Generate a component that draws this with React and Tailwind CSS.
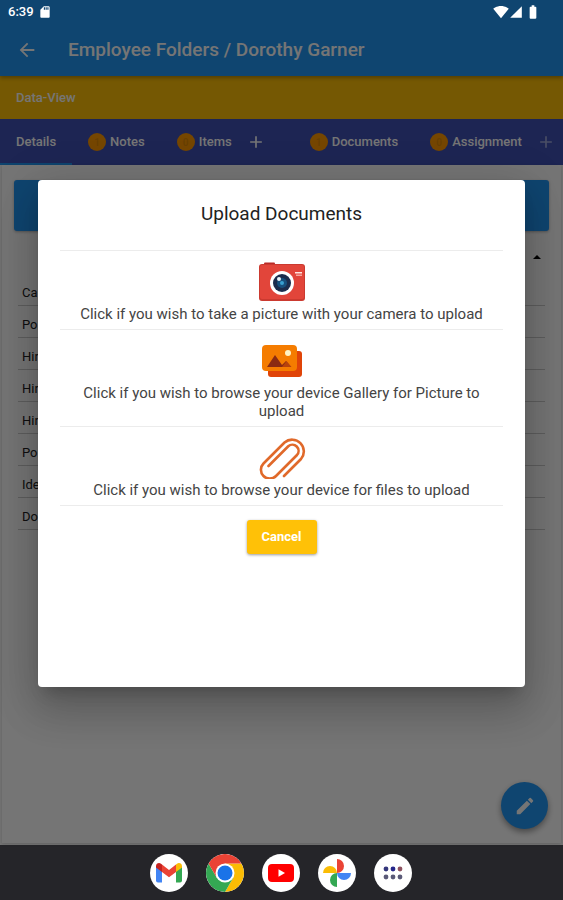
import React from 'react';
import { MdArrowBack, MdAdd, MdEdit, MdSdCard, MdSignalWifi4Bar, MdBatteryFull, MdSignalCellular4Bar } from 'react-icons/md';

const tabs = [
  { label: 'Details', active: true },
  { label: 'Notes', count: 1 },
  { label: 'Items', count: 0, canAdd: true },
  { label: 'Documents', count: 1 },
  { label: 'Assignment', count: 0, canAdd: true, faded: true },
];

const fields = ['Ca', 'Po', 'Hir', 'Hir', 'Hir', 'Po', 'Ide', 'Do'];

const CameraIcon = () => (
  <svg viewBox="0 0 48 40" className="h-10 w-12" aria-hidden="true">
    <path d="M6 3V1.500Q6 .5 7 .5h9q1 0 1 1V3z" fill="#b92b27" />
    <rect x="1" y="2" width="46" height="37" rx="3" fill="#cb3a30" />
    <rect x="2" y="3" width="44" height="34" rx="2" fill="#e2453a" />
    <rect x="37" y="10" width="7" height="1.500" fill="#ffe6e0" />
    <rect x="38" y="12.500" width="6" height="1.500" fill="#f3a59c" />
    <circle cx="24" cy="21" r="12" fill="#fff" />
    <circle cx="24" cy="21" r="9" fill="#1c2c4c" />
    <circle cx="24" cy="21" r="5" fill="#174f7c" />
    <circle cx="24" cy="21" r="2" fill="#39a0d0" />
    <circle cx="21" cy="17" r="2" fill="#e9f4fa" />
  </svg>
);

const GalleryIcon = () => (
  <svg viewBox="0 0 42 34" className="h-[34px] w-[42px]" aria-hidden="true">
    <rect x="7" y="7" width="34" height="26" rx="3" fill="#e04408" />
    <rect x="1" y="1" width="35" height="26" rx="4" fill="#f57c00" />
    <path d="M6 23 14 11l7 10 4-4 5 6z" fill="#8b2b12" />
    <path d="m21 23 4.500-6 5 6z" fill="#b8420c" />
    <circle cx="27" cy="9" r="3" fill="#fff3c4" />
  </svg>
);

const PaperclipIcon = () => (
  <svg viewBox="0 0 48 42" className="h-[42px] w-12" fill="none" stroke="#e0692a" strokeWidth="2.600" strokeLinecap="round" aria-hidden="true">
    <path d="M26 39 43 22A11.700 11.700 0 0 0 26.500 5.500L5.500 26.500A8.800 8.800 0 0 0 18 39L39 18A6.200 6.200 0 0 0 30.250 9.250L10.500 29" />
  </svg>
);

const GmailLogo = () => (
  <svg viewBox="0 0 26 20" className="h-5 w-[26px]" aria-hidden="true">
    <path d="M0 3v14.500Q0 19.500 2 19.500h4V8z" fill="#4285f4" />
    <path d="M26 3v14.500q0 2-2 2h-4V8z" fill="#34a853" />
    <path d="M20 1.500V9l6-4.500V3.200C26 .5 23-.8 21 .8z" fill="#fbbc04" />
    <path d="M6 9V1.600l7 5.300 7-5.300V9l-7 5.300z" fill="#ea4335" />
    <path d="M0 3.200V4.500L6 9V1.600L5 .8C3-.8 0 .5 0 3.200z" fill="#c5221f" />
  </svg>
);

const ChromeLogo = () => (
  <svg viewBox="0 0 48 48" className="h-[38px] w-[38px]" aria-hidden="true">
    <path d="M24 12h20.800A24 24 0 0 1 24 48l10.400-18z" fill="#fbbc04" />
    <path d="M13.600 30 3.200 12A24 24 0 0 0 24 48l10.400-18z" fill="#34a853" />
    <path d="M24 12h20.800A24 24 0 0 0 3.200 12l10.400 18z" fill="#ea4335" />
    <circle cx="24" cy="24" r="12" fill="#fff" />
    <circle cx="24" cy="24" r="9.500" fill="#1a73e8" />
  </svg>
);

const YoutubeLogo = () => (
  <svg viewBox="0 0 26 18" className="h-[18px] w-[26px]" aria-hidden="true">
    <rect width="26" height="18" rx="4" fill="#f00" />
    <path d="M10.500 5.200v7.600L17 9z" fill="#fff" />
  </svg>
);

const PhotosLogo = () => (
  <svg viewBox="0 0 28 28" className="h-7 w-7" aria-hidden="true">
    <path d="M14 0a7 7 0 0 1 0 14z" fill="#ea4335" />
    <path d="M28 14a7 7 0 0 1-14 0z" fill="#4285f4" />
    <path d="M14 28a7 7 0 0 1 0-14z" fill="#34a853" />
    <path d="M0 14a7 7 0 0 1 14 0z" fill="#fbbc04" />
  </svg>
);

const AppsIcon = () => (
  <svg viewBox="0 0 20 14" className="h-3.5 w-5" aria-hidden="true">
    <circle cx="3" cy="3" r="2.400" fill="#34377c" />
    <circle cx="10" cy="3" r="2.400" fill="#25278a" />
    <circle cx="17" cy="3" r="2.400" fill="#8e5260" />
    <circle cx="3" cy="11" r="2.400" fill="#5a5a78" />
    <circle cx="10" cy="11" r="2.400" fill="#5a5a78" />
    <circle cx="17" cy="11" r="2.400" fill="#5a5a78" />
  </svg>
);

const options = [
  { text: 'Click if you wish to take a picture with your camera to upload', icon: CameraIcon },
  { text: 'Click if you wish to browse your device Gallery for Picture to upload', icon: GalleryIcon },
  { text: 'Click if you wish to browse your device for files to upload', icon: PaperclipIcon },
];

const dock = [
  { name: 'Gmail', logo: GmailLogo },
  { name: 'Chrome', logo: ChromeLogo },
  { name: 'YouTube', logo: YoutubeLogo },
  { name: 'Photos', logo: PhotosLogo },
  { name: 'All apps', logo: AppsIcon },
];

const StatusBar = () => (
  <div className="absolute inset-x-0 top-0 z-20 flex h-6 items-center px-2 text-white">
    <span className="text-[13px] font-medium">6:39</span>
    <MdSdCard className="ml-1 h-3.5 w-3.5" />
    <div className="ml-auto flex items-center pr-3.5">
      <MdSignalWifi4Bar className="h-4 w-4" />
      <MdSignalCellular4Bar className="h-3.5 w-3.5" />
      <MdBatteryFull className="ml-0.5 h-4 w-4" />
    </div>
  </div>
);

const UploadDialog = () => (
  <div className="absolute inset-0 z-10 flex items-center justify-center bg-black/54 px-[38px] pt-[22px]">
    <div
      role="dialog"
      aria-labelledby="upload-title"
      className="flex h-[507px] w-full flex-col items-center rounded bg-white px-[22px] pt-[22px] shadow-[0_11px_15px_-7px_rgba(0,0,0,0.2),0_24px_38px_3px_rgba(0,0,0,0.14),0_9px_46px_8px_rgba(0,0,0,0.12)]"
    >
      <h2 id="upload-title" className="text-[19px] leading-6 text-[#222]">Upload Documents</h2>
      <div className="mt-6 w-full border-t border-[#ececec]">
        {options.map(({ text, icon: Icon }) => (
          <button key={text} className="flex w-full flex-col items-center border-b border-[#ececec] px-4 pt-2 pb-1.5">
            <span className="flex h-[46px] items-center"><Icon /></span>
            <span className="text-center text-[15px] leading-[18px] text-[#444]">{text}</span>
          </button>
        ))}
      </div>
      <button className="mt-3.5 h-[34px] w-[70px] rounded-[3px] bg-[#ffc107] text-[13px] font-bold text-white shadow-[0_1px_3px_rgba(0,0,0,0.4)]">
        Cancel
      </button>
    </div>
  </div>
);

const App = () => {
  return (
    <div className="flex min-h-screen flex-col font-['Roboto',sans-serif]">
      <div className="relative flex flex-1 flex-col bg-[#fafafa]">
        <StatusBar />

        {/* Header */}
        <header className="relative flex h-[76px] items-center bg-[#2196f3] px-4 pt-6 text-white shadow-[0_2px_4px_rgba(0,0,0,0.3)]">
          <button aria-label="Back" className="mr-[30px]">
            <MdArrowBack className="h-[22px] w-[22px]" />
          </button>
          <h1 className="text-[19px] font-medium">Employee Folders / Dorothy Garner</h1>
        </header>
        <div className="flex h-[43px] items-center bg-[#ffc107] px-4 text-[13px] font-medium text-white">Data-View</div>

        {/* Tabs */}
        <nav className="flex h-[46px] overflow-hidden bg-[#3f51b5] text-[13px] font-medium text-white">
          {tabs.map((tab) => (
            <a
              key={tab.label}
              href="#"
              className={`flex shrink-0 items-center px-4 pt-0.5 ${tab.active ? 'border-b-2 border-[#2196f3]' : 'border-b-2 border-transparent'}`}
            >
              {tab.count !== undefined && (
                <span className="mr-1 flex h-[18px] w-[18px] items-center justify-center rounded-full bg-[#ff9800] text-[10px] text-[#e08a08]">
                  {tab.count}
                </span>
              )}
              {tab.label}
              {tab.canAdd && <MdAdd className={`ml-3.5 h-5 w-5 ${tab.faded ? 'opacity-50' : 'mr-3'}`} />}
            </a>
          ))}
        </nav>

        {/* Details card */}
        <main className="mx-0.5 mb-0.5 flex-1 bg-white px-3 pt-[15px] shadow-[0_1px_3px_rgba(0,0,0,0.15)]">
          <div className="h-[51px] rounded-[3px] bg-[#2196f3] shadow-[0_1px_3px_rgba(0,0,0,0.3)]" />
          <div className="flex h-[43px] justify-end px-2 pt-6">
            <svg viewBox="0 0 8 4" className="h-1 w-2" aria-hidden="true">
              <path d="M0 4 4 0l4 4z" fill="#000" />
            </svg>
          </div>
          <ul className="mx-1">
            {fields.map((field, i) => (
              <li key={i} className="flex h-8 items-end border-b border-[#ccc] px-1 pb-1 text-[13px] leading-4 text-[#222]">{field}</li>
            ))}
          </ul>
        </main>

        <button aria-label="Edit" className="absolute right-[15px] bottom-4 flex h-[47px] w-[47px] items-center justify-center rounded-full bg-[#2196f3] text-white shadow-[0_3px_6px_rgba(0,0,0,0.4)]">
          <MdEdit className="h-[22px] w-[22px]" />
        </button>

        <UploadDialog />
      </div>

      {/* System dock */}
      <footer className="flex h-[55px] items-center justify-center gap-[18px] bg-[#252529] pr-0.5">
        {dock.map(({ name, logo: Logo }) => (
          <button key={name} aria-label={name} className="flex h-[38px] w-[38px] items-center justify-center overflow-hidden rounded-full bg-white">
            <Logo />
          </button>
        ))}
      </footer>
    </div>
  );
};

export default App;
